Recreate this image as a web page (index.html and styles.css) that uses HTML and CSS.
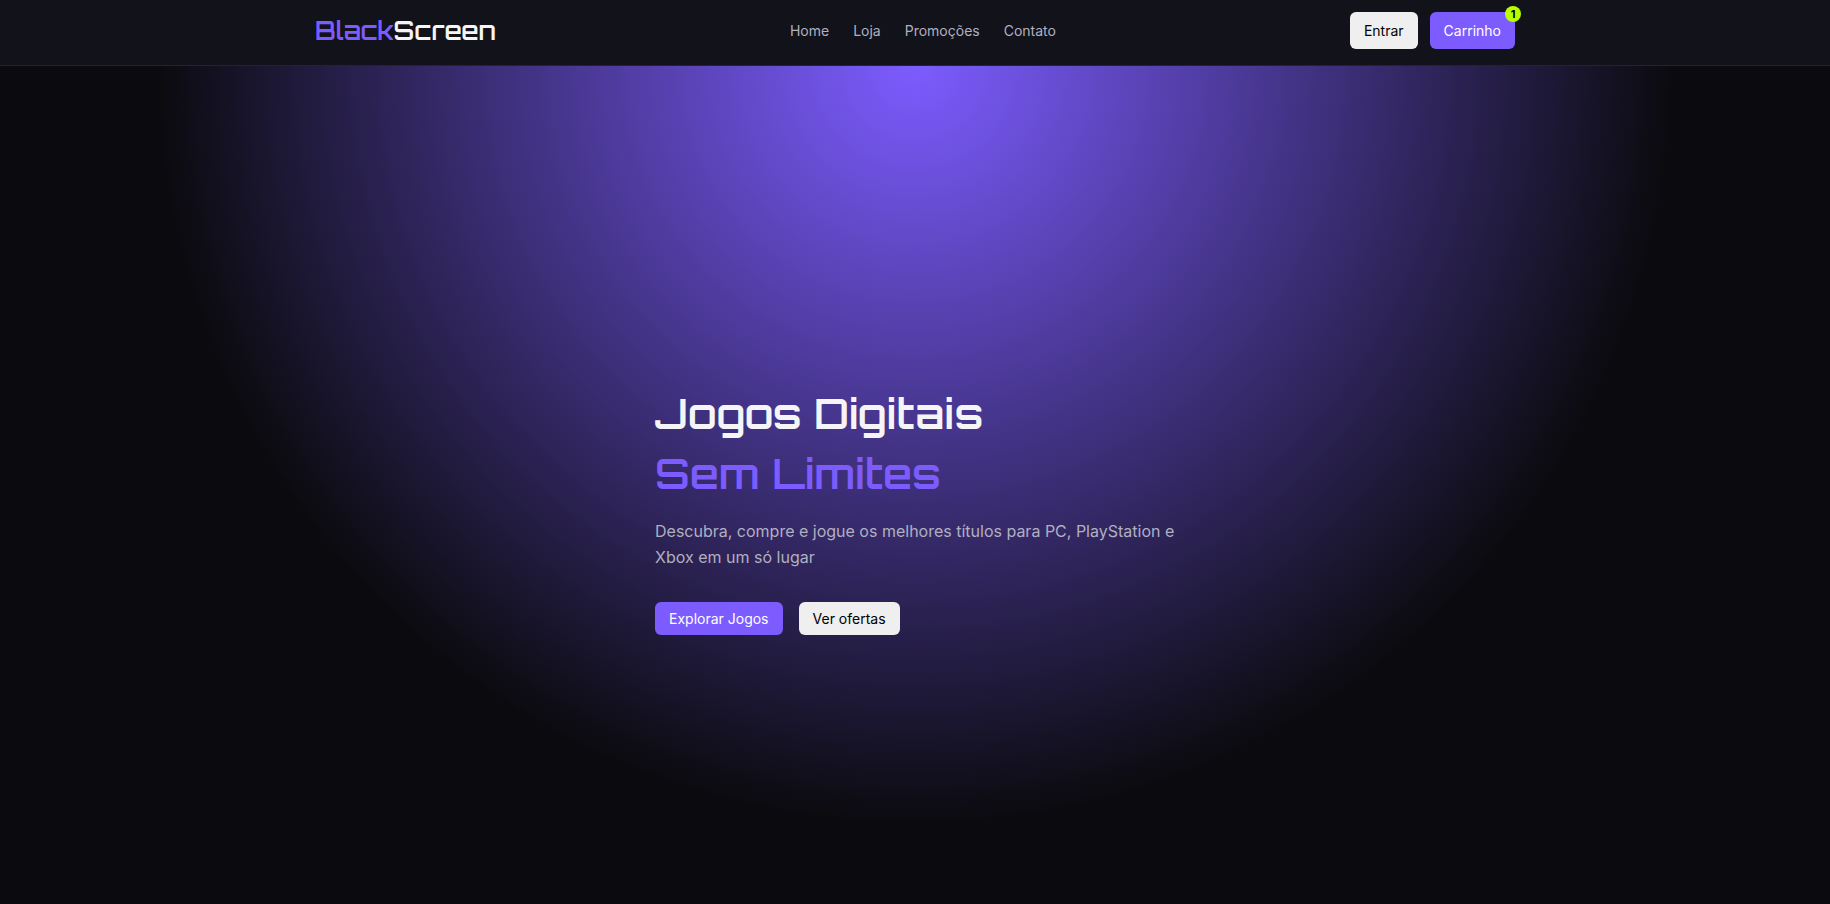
FILE: index.html
```html
<!DOCTYPE html>
<html lang="pt-BR">
<head>
    <meta charset="UTF-8">
    <meta name="viewport" content="width=device-width, initial-scale=1.0">
    <title>BlackScreen</title>
    <link rel="stylesheet" href="styles.css">
</head>
<body>
    <header class="header">
        <div class="container header-content">
            <a href="#" class="logo"><span>Black</span>Screen</a>

            <nav class="nav">
                <a href="#home">Home</a>
                <a href="#loja">Loja</a>
                <a href="#promocoes">Promoções</a>
                <a href="#contato">Contato</a>
            </nav>

            <div class="header-actions">
                <button type="button" class="btn">Entrar</button>
                <button type="button" class="btn btn-primary cart-btn">Carrinho<span class="cart-count">1</span></button>
            </div>
        </div>
    </header>

    <main class="hero" id="home">
        <div class="hero-content">
            <h1>Jogos Digitais<br><span>Sem Limites</span></h1>
            <p>Descubra, compre e jogue os melhores títulos para PC, PlayStation e Xbox em um só lugar</p>
            <div class="hero-buttons">
                <button type="button" class="btn btn-primary">Explorar Jogos</button>
                <button type="button" class="btn">Ver ofertas</button>
            </div>
        </div>
    </main>
</body>
</html>
```
FILE: styles.css
```css
:root {
    --bg: #0b0b0f;
    --surface: #12121a;
    --primary: #7c5cff;
    --accent: #b6ff00;
    --text: #f5f5f7;
    --muted: #b0b0c0;
}

* {
    margin: 0;
    padding: 0;
    box-sizing: border-box;
}

body {
    font-family: Inter, sans-serif;
    background: var(--bg);
    color: var(--text);
    line-height: 1.6;
}

.container {
    width: 100%;
    max-width: 1200px;
    margin: 0 auto;
}

/* Header */
.header {
    background: var(--surface);
    border-bottom: 1px solid #24242c;
    padding: 12px 0 16px;
}

.header-content {
    display: flex;
    align-items: center;
    justify-content: space-between;
}

.logo {
    font-family: Orbitron, sans-serif;
    font-size: 25px;
    font-weight: 600;
    line-height: 36px;
    color: var(--text);
    text-decoration: none;
}

.logo span {
    color: var(--primary);
}

.nav {
    display: flex;
    gap: 24px;
}

.nav a {
    color: var(--muted);
    font-size: 14px;
    line-height: 24px;
    text-decoration: none;
}

.nav a:hover {
    color: var(--text);
}

.header-actions {
    display: flex;
    gap: 12px;
}

/* Buttons */
.btn {
    padding: 8px 14px;
    border: none;
    border-radius: 6px;
    background: #efefef;
    color: #000;
    font-family: inherit;
    font-size: 14px;
    line-height: 17px;
    cursor: pointer;
}

.btn-primary {
    background: var(--primary);
    color: #fff;
}

.header-actions .btn {
    padding: 10px 14px;
}

.cart-btn {
    position: relative;
}

.cart-count {
    position: absolute;
    top: -6px;
    right: -6px;
    width: 16px;
    border-radius: 50%;
    background: var(--accent);
    color: #000;
    font-size: 11px;
    font-weight: 700;
    line-height: 16px;
    text-align: center;
}

/* Hero */
.hero {
    min-height: calc(100vh - 66px);
    display: flex;
    align-items: center;
    justify-content: center;
    padding: 48px 16px 0;
    background: radial-gradient(circle at top, var(--primary), var(--bg) 61%);
}

.hero-content {
    max-width: 520px;
}

.hero h1 {
    font-family: Orbitron, sans-serif;
    font-size: 42px;
    font-weight: 600;
    line-height: 60px;
    margin-bottom: 16px;
}

.hero h1 span {
    color: var(--primary);
}

.hero p {
    color: var(--muted);
    font-size: 16px;
    margin-bottom: 32px;
}

.hero-buttons {
    display: flex;
    gap: 16px;
}
```
